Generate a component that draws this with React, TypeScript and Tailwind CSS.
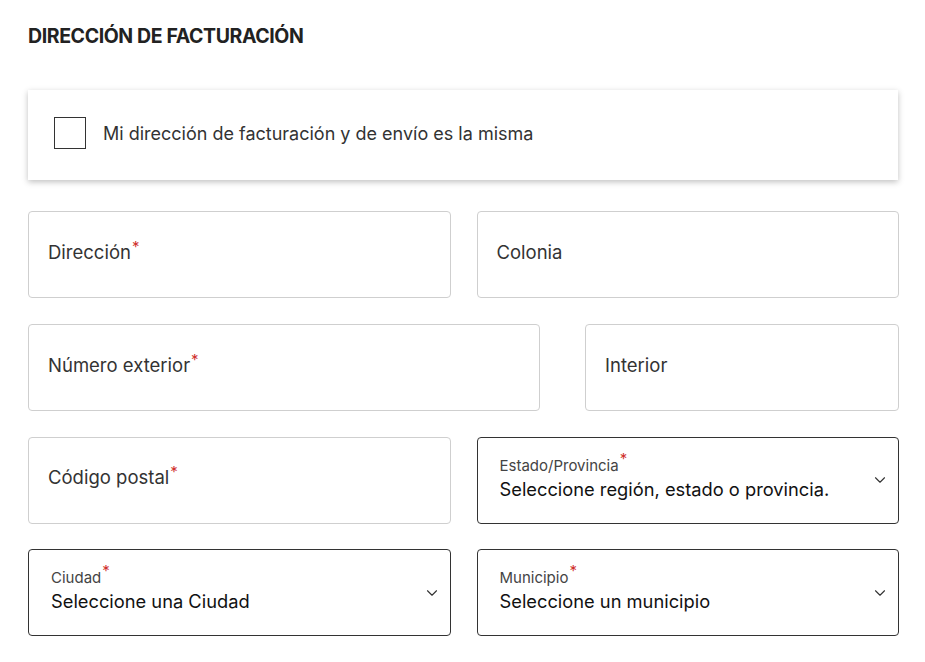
import { ChevronDown } from "lucide-react";

const font = { fontFamily: "Inter, 'Open Sans', sans-serif" };

function Req() {
  return <span className="relative -top-[7px] ml-[1px] text-[15px] text-[#d0312d]">*</span>;
}

function Field({ label, required, className = "" }: { label: string; required?: boolean; className?: string }) {
  return (
    <div
      className={`flex h-[87px] items-center rounded-[4px] border border-[#cfcfcf] bg-white pl-[19px] pr-5 pb-[4px] ${className}`}
    >
      <span className="text-[18.5px] text-[#333]">
        {label}
        {required && <Req />}
      </span>
    </div>
  );
}

function Select({ label, value, className = "" }: { label: string; value: string; className?: string }) {
  return (
    <div
      className={`flex h-[87px] items-center justify-between rounded-[4px] border border-[#333] bg-white pl-[22px] pr-[9px] ${className}`}
    >
      <div className="flex flex-col pb-[3px]">
        <span className="text-[15px] leading-[20px] text-[#444]">
          {label}
          <Req />
        </span>
        <span className="text-[18.3px] leading-[26px] text-[#111]">{value}</span>
      </div>
      <ChevronDown className="size-[18px] text-[#333]" strokeWidth={1.5} />
    </div>
  );
}

export default function App() {
  return (
    <div className="min-h-[662px] w-[925px] bg-white pl-[28px] pr-[26px] pt-[22px]" style={font}>
      <h2 className="text-[19.5px] font-bold tracking-[-0.4px] text-[#222]">DIRECCIÓN DE FACTURACIÓN</h2>

      <div className="mt-[39px] mr-[1px] flex h-[90px] items-center gap-[17px] bg-white px-[26px] pb-[4px] shadow-[0_2px_6px_rgba(0,0,0,0.25)]">
        <div className="size-[32px] border border-[#333] bg-white" />
        <span className="text-[18px] text-[#333]">Mi dirección de facturación y de envío es la misma</span>
      </div>

      <div className="mt-[31px] flex flex-col gap-[25.7px]">
        <div className="grid grid-cols-2 gap-[26px]">
          <Field label="Dirección" required />
          <Field label="Colonia" />
        </div>
        <div className="flex gap-[45px]">
          <Field label="Número exterior" required className="w-[512px]" />
          <Field label="Interior" className="flex-1" />
        </div>
        <div className="grid grid-cols-2 gap-[26px]">
          <Field label="Código postal" required />
          <Select label="Estado/Provincia" value="Seleccione región, estado o provincia." />
        </div>
        <div className="grid grid-cols-2 gap-[26px]">
          <Select label="Ciudad" value="Seleccione una Ciudad" />
          <Select label="Municipio" value="Seleccione un municipio" />
        </div>
      </div>
    </div>
  );
}
